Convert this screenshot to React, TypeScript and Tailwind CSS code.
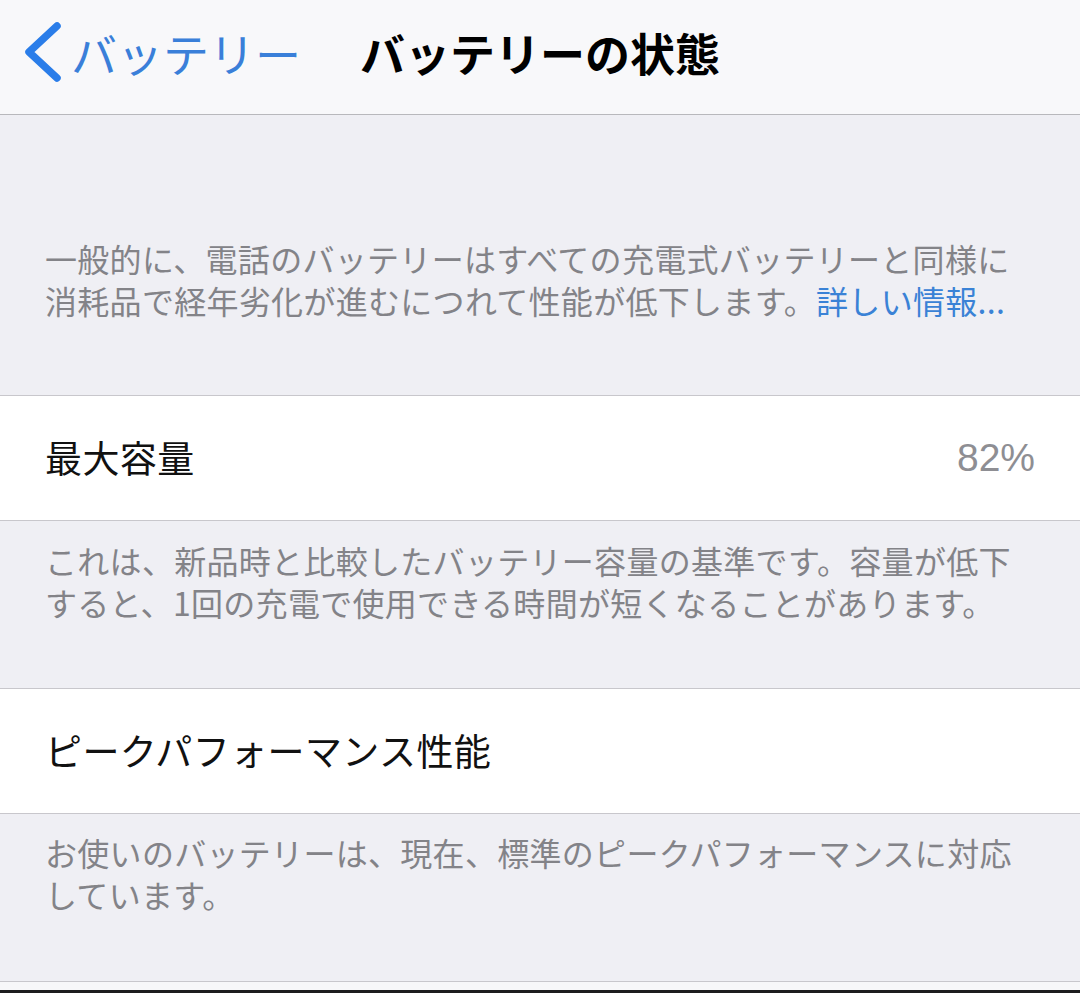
import React from 'react';

const FONT = "font-['Noto_Sans_CJK_JP','Noto_Sans',sans-serif]";

const Footnote: React.FC<{ lines: React.ReactNode[]; className: string }> = ({ lines, className }) => (
  <div className={`bg-[#efeff4] px-[45px] text-[32px] leading-[42px] tracking-[0.3px] text-[#838388] ${className}`}>
    {lines.map((line, i) => (
      <div key={i} className="whitespace-nowrap">
        {line}
      </div>
    ))}
  </div>
);

const Row: React.FC<{ label: string; value?: string; className?: string }> = ({ label, value, className = '' }) => (
  <div className={`flex items-center justify-between bg-white border-y border-[#c8c7cc] px-[45px] ${className}`}>
    <span className="text-[37px] tracking-[0.4px] text-[#111]">{label}</span>
    {value && (
      <span className="font-['Liberation_Sans',sans-serif] text-[39px] text-[#8e8e93]">{value}</span>
    )}
  </div>
);

const App: React.FC = () => {
  return (
    <div className={`w-[1080px] h-[993px] overflow-hidden bg-[#efeff4] ${FONT}`}>
      {/* Navigation bar */}
      <div className="grid grid-cols-[1fr_auto_1fr] items-center h-[115px] pb-[10px] bg-[#f8f8fa] border-b border-[#b8b8bc]">
        <div className="flex items-center pl-[23px]">
          <svg width="40" height="64" viewBox="0 0 40 64" fill="none">
            <path d="M34 6 L6 32 L34 58" stroke="#2a7de9" strokeWidth="7.5" strokeLinecap="round" strokeLinejoin="round" />
          </svg>
          <span className="ml-[8px] text-[46px] text-[#3a7fd9] leading-none">バッテリー</span>
        </div>
        <div className="text-[45px] font-bold text-black leading-none">バッテリーの状態</div>
        <div />
      </div>

      <Footnote
        className="h-[280px] pt-[122px]"
        lines={[
          '一般的に、電話のバッテリーはすべての充電式バッテリーと同様に',
          <>
            消耗品で経年劣化が進むにつれて性能が低下します。
            <span className="text-[#3a82d6]">詳しい情報...</span>
          </>,
        ]}
      />

      <Row label="最大容量" value="82%" className="h-[126px]" />

      <Footnote
        className="h-[167px] pt-[18px]"
        lines={[
          'これは、新品時と比較したバッテリー容量の基準です。容量が低下',
          'すると、1回の充電で使用できる時間が短くなることがあります。',
        ]}
      />

      <Row label="ピークパフォーマンス性能" className="h-[126px]" />

      <Footnote
        className="h-[167px] pt-[17px]"
        lines={['お使いのバッテリーは、現在、標準のピークパフォーマンスに対応', 'しています。']}
      />

      <div className="h-[9px] bg-[#f7f7f9] border-t border-[#c8c7cc]" />
      <div className="h-[3px] bg-[#1c1c1e]" />
    </div>
  );
};

export default App;
